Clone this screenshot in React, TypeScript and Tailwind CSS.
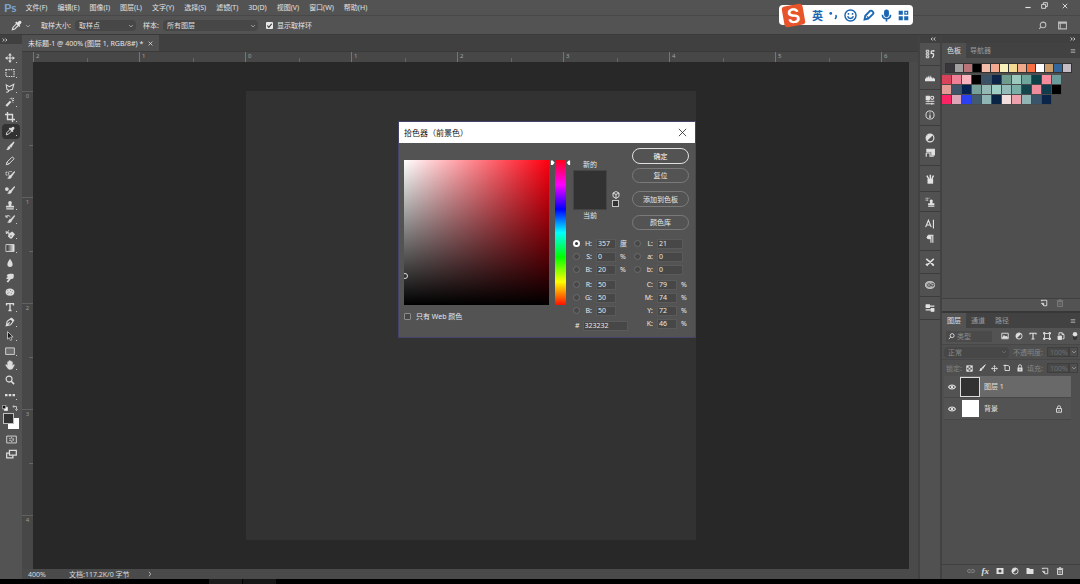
import React from "react";

type IconProps = { className?: string; children: React.ReactNode };

function Icon({ className = "size-[11px]", children }: IconProps) {
  return (
    <svg
      viewBox="0 0 16 16"
      className={"shrink-0 " + className}
      fill="none"
      stroke="currentColor"
      strokeWidth="1.8"
      aria-hidden="true"
    >
      {children}
    </svg>
  );
}

const eyedropper = (
  <>
    <path d="M2 14l1-3.500 5.500-5.500 2.500 2.500L5.500 13z" strokeWidth="1.600" />
    <path d="M6 4l6 6 1.500-1.500-1.200-1.200 2.200-2.200c1.200-1.400.7-2.900-.3-3.600-1-.8-2.200-.5-3 .3L9.300 3.700 8 2.300z" fill="currentColor" stroke="none" />
  </>
);
const brush = (
  <>
    <path d="M14.500 1.500L8 7.500l1.700 1.700z" fill="currentColor" strokeWidth="1.800" />
    <path d="M7.300 8.300c-2-.4-3 .8-3.200 2.500-.1 1.400-1 2.500-2.600 2.700 2.600 1.500 7 .8 7.300-3.500z" fill="currentColor" stroke="none" />
  </>
);
const smallBrush = (
  <path d="M15 2L9 8.500c-1.600-.3-2.600.7-2.900 2.300-.2 1.200-1 2-2.100 2.400 2.700 1.500 6.600.5 7-3.200L16 3z" fill="currentColor" stroke="currentColor" strokeWidth="0.600" />
);
const stamp = (
  <path d="M8 1.500a3 3 0 0 1 2.600 4.300c-.6 1.200-.6 2.200-.6 3.200h3.500c.6 0 1 .4 1 1V12h-13v-2c0-.6.4-1 1-1H6c0-1 0-2-.6-3.200A3 3 0 0 1 8 1.500zM2 13h12v2H2z" fill="currentColor" stroke="none" />
);
const move = (
  <>
    <path d="M8 3v10M3 8h10" />
    <path d="M8 0l3 4H5zM8 16l3-4H5zM0 8l4-3v6zM16 8l-4-3v6z" fill="currentColor" stroke="none" />
  </>
);
const newPage = (
  <>
    <path d="M5 3.500H2.500v-1h11v11H7.500" strokeWidth="1.800" />
    <path d="M2.500 8.500h5v5z" fill="currentColor" strokeWidth="1.200" />
  </>
);
const trash = (
  <>
    <path d="M3 5h10v10H3zM1.500 3.500h13M6 3V1.500h4V3" />
    <path d="M6 7v6M8 7v6M10 7v6" strokeWidth="1" />
  </>
);
const halfCircle = (
  <>
    <circle cx="8" cy="8" r="6.200" />
    <path d="M12.500 3.500a6.400 6.400 0 0 0-9 9z" fill="currentColor" stroke="none" />
  </>
);
const lock = (
  <>
    <path d="M3 7h10v8H3z" fill="currentColor" stroke="none" />
    <path d="M5 7V4.500a3 3 0 0 1 6 0V7" strokeWidth="1.800" />
    <path d="M8 9.500v3" stroke="#4f4f4f" />
  </>
);
const chevron = <path d="M3 5.500l5 5 5-5" strokeWidth="2.200" />;
const panelMenu = <path d="M2 4h12M2 8h12M2 12h12" strokeWidth="2" />;

type Tool = { name: string; art: React.ReactNode; more: boolean };

const tools: Tool[] = [
  { name: "移动工具", more: true, art: move },
  { name: "矩形选框工具", more: true, art: <path d="M1.500 2.500h13v11h-13z" strokeDasharray="2.400 1.400" /> },
  { name: "多边形套索工具", more: true, art: <path d="M2 3l5 3 7-4-2 8-6 2-3-2zM6 12c0 2-1.500 3-4 2.500" strokeWidth="1.700" /> },
  {
    name: "魔棒工具", more: true,
    art: <><path d="M2 14.500l7-7.500" strokeWidth="3.500" /><path d="M11 1v3M14.500 5.500h-3M14.500 1.500l-2 2M8 2l1.500 1.500M13 9l-1-1.500" strokeWidth="1.600" /></>,
  },
  { name: "裁剪工具", more: true, art: <path d="M4 0v12h12M0 4h12v12" strokeWidth="2.200" /> },
  { name: "吸管工具", more: true, art: eyedropper },
  { name: "画笔工具", more: false, art: brush },
  { name: "铅笔工具", more: false, art: <path d="M2 14l1-4 8-8c1.500-1 4 1.500 3 3l-8 8zM3.500 10l2.500 2.500" strokeWidth="1.600" /> },
  { name: "混合器画笔工具", more: false, art: <>{smallBrush}<path d="M1.500 3.500h4.500v4.500H1.500zM7 2.500h4" strokeWidth="1.500" strokeDasharray="2 0.800" /></> },
  { name: "颜色替换工具", more: false, art: <>{smallBrush}<circle cx="3" cy="6.500" r="3" fill="currentColor" stroke="none" /></> },
  { name: "仿制图章工具", more: true, art: stamp },
  { name: "历史记录画笔工具", more: true, art: <>{smallBrush}<path d="M1.500 4.500c2-2.500 5-2.500 7 0M1.500 2v3h3" strokeWidth="1.600" /></> },
  {
    name: "橡皮擦工具", more: true,
    art: <><path d="M5.500 8l6-4L16 8.500l-5 6.500H8l-3-3.500z" fill="currentColor" stroke="none" /><path d="M1 3l5 5M6 2L2 8M1 6h6" strokeWidth="1.500" /><circle cx="9.500" cy="11" r="1.200" fill="#535353" stroke="none" /></>,
  },
  {
    name: "渐变工具", more: true,
    art: <><defs><linearGradient id="toolGradient"><stop offset="0" stopColor="#222" /><stop offset="1" stopColor="#eee" /></linearGradient></defs><path d="M1.500 2.500h13v11h-13z" fill="url(#toolGradient)" strokeWidth="1.400" /></>,
  },
  { name: "模糊工具", more: false, art: <path d="M8 1c2 3.500 4.200 5.700 4.200 9a4.200 4.200 0 0 1-8.400 0C3.800 6.700 6 4.500 8 1z" fill="currentColor" stroke="none" /> },
  { name: "涂抹工具", more: false, art: <path d="M3 3c3-2 7-2 11-1v4c0 3-3 4-5 4l-4 5-2.500-1L6 9 3 10 2 8l3-2-2-1z" fill="currentColor" stroke="none" /> },
  {
    name: "海绵工具", more: false,
    art: <><path d="M1 8c0-4 3-5.500 7-5.500S15 4.500 15 8s-2 6-7 6-7-2-7-6z" fill="currentColor" stroke="none" /><path d="M4 6h1M8 5.500h1M11 7h1M6 9h1M9.500 10.500h1M4 10.500h1" stroke="#555" strokeWidth="1.400" /></>,
  },
  { name: "文字工具", more: true, art: <path d="M2.500 5.500V2.500h11v3M8 2.500v11M5.500 13.500h5" strokeWidth="2.200" /> },
  { name: "钢笔工具", more: true, art: <path d="M2 14l1.500-7L9 3l4 4-4 5.500zM2 14l5.500-5.500M10 1.500l4.500 4.500" strokeWidth="1.900" /> },
  { name: "路径选择工具", more: true, art: <path d="M4 1l9 8.500H9l2 4.500-2.200 1-2-4.500L4 13z" fill="#1c1c1c" strokeWidth="1.200" /> },
  { name: "矩形工具", more: true, art: <path d="M1 3h14v10.500H1z" fill="#6d6d6d" strokeWidth="1.400" /> },
  { name: "抓手工具", more: true, art: <path d="M4 9V3.500a1 1 0 0 1 2 0V7 1.800a1 1 0 0 1 2 0V7 2a1 1 0 0 1 2 0v5.500-4a1 1 0 0 1 2 0V9l1.500-1.500c1-.8 2 .2 1.500 1L12 14c-2 2-6 1.500-7.500-.5L1 8.500C.6 7.300 2 6.800 2.600 7.500z" fill="currentColor" stroke="currentColor" strokeWidth="0.500" /> },
  { name: "缩放工具", more: false, art: <><circle cx="6.500" cy="6.500" r="4.800" /><path d="M10 10l4.500 4.500" strokeWidth="2.600" /></> },
  { name: "编辑工具栏", more: true, art: <path d="M0 6.500h4v3.500H0zM6 6.500h4v3.500H6zM12 6.500h4v3.500h-4z" fill="currentColor" stroke="none" /> },
];

const menus = ["文件(F)", "编辑(E)", "图像(I)", "图层(L)", "文字(Y)", "选择(S)", "滤镜(T)", "3D(D)", "视图(V)", "窗口(W)", "帮助(H)"];

const swatchHead = ["#38363a", "#a3a0a2", "#b87377", "#000000", "#f3bca9", "#f2a98f", "#f8f0bb", "#f3dc92", "#f1a98c", "#f67041", "#ffffff", "#cc9c68", "#33669b", "#c5bdc5"];
const swatchRows = [
  ["#d8435b", "#ee8196", "#f7b4be", "#000000", "#3b5166", "#0b2447", "#6f9c8c", "#9cc9bd", "#6ea69e", "#0d4148", "#f58b9c", "#699c9a"],
  ["#e59b95", "#405469", "#04214f", "#78a09b", "#95b9b5", "#9fcfc5", "#93bcb9", "#7caea8", "#13444b", "#f08d9c", "#123b4e", "#000000"],
  ["#fa2364", "#dca5b8", "#2b40f0", "#43596c", "#8fb6b4", "#0a2446", "#f3dede", "#eda1ad", "#91b5b5", "#3a5569", "#0b2549"],
];

const dockGroups: { height: string; items: { name: string; art: React.ReactNode }[] }[] = [
  {
    height: "h-[23px]",
    items: [{ name: "历史记录", art: <><path d="M2 2h4v3H2zM2 6.500h4v3H2zM2 11h4v3H2z" strokeWidth="1.500" /><path d="M10 3h4M10 3v4c5-1 5 5 1 7M14 1.500v3" strokeWidth="2" /></> }],
  },
  {
    height: "h-6",
    items: [{ name: "直方图", art: <path d="M0 13V9l2-1 1-3 1 3 1-4 2 4 1-5 2 5 1-3 1 4 2-2 2 3v3z" fill="currentColor" stroke="none" /> }],
  },
  {
    height: "h-9",
    items: [
      { name: "属性", art: <><path d="M2 2h5v5H2z" fill="currentColor" /><circle cx="11.500" cy="4.500" r="2.500" /><path d="M1 10h14M1 14h14M5 8.500v3M11 12.500v3" /></> },
      { name: "信息", art: <><circle cx="8" cy="8" r="6.500" strokeWidth="1.500" /><path d="M8 7v5M8 3.800v1.700M6.500 11.500h3" /></> },
    ],
  },
  {
    height: "h-10",
    items: [
      { name: "调整", art: halfCircle },
      { name: "样式", art: <><path d="M3 2h12v9h-4V6H3z" fill="currentColor" /><path d="M2 8h6v6M2 8v6M9 13h5" /></> },
    ],
  },
  {
    height: "h-[26px]",
    items: [{ name: "画笔预设", art: <><path d="M4 8h9v7.500H4z" fill="currentColor" stroke="none" /><path d="M6 8L3 2.500M8.500 8V1M11 8l2.500-5.500" strokeWidth="2.400" /></> }],
  },
  {
    height: "h-5",
    items: [{ name: "仿制源", art: <><path d="M1 2h6M1 5h4" strokeDasharray="1.500 1" /><path d="M10 4a2.500 2.500 0 0 1 2 4v2h3v3H5v-3h3V8a2.500 2.500 0 0 1 2-4zM5 14h10v1.500H5z" fill="currentColor" stroke="none" /></> }],
  },
  {
    height: "h-[39px]",
    items: [
      { name: "字符", art: <path d="M1 13L5.500 2 10 13M2.500 9.500h6M13.500 1v14" /> },
      { name: "段落", art: <><path d="M12.500 2v12M9.500 2v12M5 2h8.500" /><path d="M9.500 2H6a3 3 0 0 0 0 6.500h3.500z" fill="currentColor" stroke="none" /></> },
    ],
  },
  {
    height: "h-[23px]",
    items: [{ name: "工具预设", art: <path d="M2 3l12 10M14 3L3 13M1.500 11l3 3M11 11.500l3 2.500" strokeWidth="2.400" /> }],
  },
  {
    height: "h-[23px]",
    items: [{ name: "库", art: <><ellipse cx="8" cy="8" rx="7.500" ry="5.500" fill="#a8a8a8" strokeWidth="1.200" /><path d="M9 8a2.500 2 0 1 1-1-1.500l3 3a2.500 2 0 1 0-1-3" stroke="#444" strokeWidth="1.300" /></> }],
  },
  {
    height: "h-[23px]",
    items: [{ name: "画笔设置", art: <><path d="M1 5h14M1 11h14" /><path d="M2 3h5v4H2zM10 9h4v4h-4z" fill="currentColor" /></> }],
  },
];

function Select({ label, value, width, dim }: { label: string; value: string; width: string; dim?: boolean }) {
  return (
    <span className={"relative flex h-[11px] items-center rounded-sm bg-[#474747] " + width}>
      <select
        aria-label={label}
        className={"h-full w-full appearance-none bg-transparent pl-1 text-[7px] leading-none outline-none " + (dim ? "text-[#8a8a8a]" : "text-[#dedede]")}
      >
        <option>{value}</option>
      </select>
      <Icon className={"pointer-events-none absolute right-0.5 size-[6px] " + (dim ? "text-[#707070]" : "text-[#b0b0b0]")}>{chevron}</Icon>
    </span>
  );
}

function ColorRow({ id, name, value, unit, radio, checked, wide, last }: {
  id: string; name: string; value: string; unit?: string; radio?: boolean; checked?: boolean; wide?: boolean; last?: boolean;
}) {
  return (
    <div className={"flex h-[13px] items-center " + (last ? "mb-0.5" : "")}>
      <span className="flex w-[9px] shrink-0">
        {radio && (
          <input
            type="radio"
            name="channel"
            defaultChecked={checked}
            aria-label={name + " " + id}
            className="size-[7px] appearance-none rounded-full border border-[#6c6c6c] bg-[#474747] checked:border-2 checked:border-white checked:bg-[#333]"
          />
        )}
      </span>
      <label htmlFor={id} className="w-[10px] shrink-0 text-right">{name}:</label>
      <input
        id={id}
        defaultValue={value}
        className={"ml-1 h-[10px] min-w-0 shrink-0 border border-[#5a5a5a] bg-[#474747] pl-px outline-none " + (wide ? "w-[26px]" : "w-5")}
      />
      {unit && <span className="ml-1">{unit}</span>}
    </div>
  );
}

function ColorPicker() {
  return (
    <section
      role="dialog"
      aria-label="拾色器"
      className="absolute top-[121px] left-[398px] w-[298px] border border-[#44446a] bg-[#535353] text-[7px] leading-none text-[#e8e8e8]"
    >
      <header className="flex h-[21px] items-center justify-between bg-white pr-2 pl-[5px] text-[#111]">
        <h2 className="text-[8px]">拾色器（前景色）</h2>
        <button aria-label="关闭" className="text-[#222]">
          <Icon className="size-[9px]"><path d="M1.500 1.500l13 13M14.500 1.500l-13 13" strokeWidth="1.400" /></Icon>
        </button>
      </header>
      <div className="flex h-[194px] px-[5px]">
        <div className="pt-[17px]">
          <div
            className="relative h-[145px] w-[145px] overflow-hidden bg-[linear-gradient(to_top,#000,transparent),linear-gradient(to_right,#fff,#ff0010)]"
            role="img"
            aria-label="颜色区域"
          >
            <span className="absolute top-[113px] -left-0.5 size-[6px] rounded-full border border-[#ddd]" />
          </div>
          <label className="mt-2 flex items-center gap-[5px]">
            <input type="checkbox" className="size-[7px] appearance-none rounded-[1px] border border-[#8c8c8c] bg-[#464646]" />
            只有 Web 颜色
          </label>
        </div>
        <div className="flex pt-[17px]">
          <Icon className="size-[6px] text-white"><path d="M5 1h5l5 6-5 6H5z" fill="currentColor" stroke="none" /></Icon>
          <div className="relative h-[145px] w-[11px] bg-[linear-gradient(to_bottom,#ff0018,#ff00ff_17%,#0000ff_34%,#00ffff_50%,#00ff00_67%,#ffff00_84%,#ff1000)]">
            <input type="range" min="0" max="360" defaultValue="357" aria-label="色相" className="absolute inset-0 h-full w-full opacity-0 [writing-mode:vertical-lr]" />
          </div>
          <Icon className="size-[6px] text-white"><path d="M11 1H7L2 7l5 6h4z" fill="currentColor" stroke="none" /></Icon>
        </div>
        <div className="ml-px flex flex-col pt-[5px]">
          <div className="flex h-[89px]">
            <div className="flex w-[34px] flex-col items-center pt-[13px]">
              <span>新的</span>
              <div className="my-0.5 h-10 w-full border border-[#454545] bg-[#323232]" />
              <span>当前</span>
            </div>
            <div className="flex w-[25px] flex-col items-start gap-px pt-[43px] pl-[5px]">
              <Icon className="size-2"><path d="M8 1l6 3v7l-6 4-6-4V4zM2 4l6 3 6-3M8 7v8" /></Icon>
              <span className="size-[7px] border border-[#c5c5c5] bg-[#323232]" />
            </div>
            <div className="flex flex-col">
              <button className="h-4 w-[57px] rounded-full border border-[#e0e0e0] text-white">确定</button>
              <button className="mt-1 h-[15px] w-[57px] rounded-full border border-[#7a7a7a]">复位</button>
              <button className="mt-2 h-4 w-[57px] rounded-full border border-[#7a7a7a]">添加到色板</button>
              <button className="mt-2 h-[15px] w-[57px] rounded-full border border-[#7a7a7a]">颜色库</button>
            </div>
          </div>
          <div className="flex">
            <div className="w-[61px]">
              <ColorRow id="hue" name="H" value="357" unit="度" radio checked />
              <ColorRow id="sat" name="S" value="0" unit="%" radio />
              <ColorRow id="bri" name="B" value="20" unit="%" radio last />
              <ColorRow id="red" name="R" value="50" radio />
              <ColorRow id="green" name="G" value="50" radio />
              <ColorRow id="blue" name="B" value="50" radio last />
              <div className="flex h-[13px] items-center">
                <label htmlFor="hex" className="pl-0.5">#</label>
                <input id="hex" defaultValue="323232" className="ml-[3px] h-[10px] w-[45px] border border-[#5a5a5a] bg-[#474747] pl-px outline-none" />
              </div>
            </div>
            <div>
              <ColorRow id="lab-l" name="L" value="21" radio wide />
              <ColorRow id="lab-a" name="a" value="0" radio wide />
              <ColorRow id="lab-b" name="b" value="0" radio wide last />
              <ColorRow id="cyan" name="C" value="79" unit="%" />
              <ColorRow id="magenta" name="M" value="74" unit="%" />
              <ColorRow id="yellow" name="Y" value="72" unit="%" />
              <ColorRow id="black" name="K" value="46" unit="%" />
            </div>
          </div>
        </div>
      </div>
    </section>
  );
}

function InputMethodBar() {
  return (
    <div className="absolute top-[5px] left-[779px] flex h-5 w-[134px] items-center rounded-sm bg-white pr-1 text-[#1b66b3]">
      <span className="ml-1 flex size-[21px] -rotate-10 items-center justify-center rounded-[3px] bg-[#e8542a] font-[Inter] text-[20px] leading-none font-semibold text-white">S</span>
      <div className="ml-2 flex flex-1 items-center justify-between">
        <span className="text-[11px] leading-none font-bold">英</span>
        <Icon><circle cx="4" cy="5" r="2" fill="currentColor" stroke="none" /><path d="M11 7.500c1.500 1.500 1 4-1 5.500" strokeWidth="2.400" /></Icon>
        <Icon className="size-[13px]"><circle cx="8" cy="8" r="6.800" /><path d="M4.500 9c1 3.500 6 3.500 7 0M5.500 5v2M10.500 5v2" /></Icon>
        <Icon className="size-[12px]"><path d="M2 14l1-5 6.500-6.500c2.500-1 5.500 2 4 4L7 13z" strokeWidth="2.400" /><path d="M5 10l3 2" strokeWidth="2" /></Icon>
        <Icon className="size-[13px]"><rect x="5" y="0.500" width="6" height="9.500" rx="3" fill="currentColor" stroke="none" /><path d="M3 7c0 6.500 10 6.500 10 0M8 12v3.500" strokeWidth="2" /></Icon>
        <Icon><path d="M1 1h6v6H1zM1 9h6v6H1zM9 9h6v6H9z" fill="currentColor" stroke="none" /><path d="M10 2h4v4h-4z" strokeWidth="1.800" /></Icon>
      </div>
    </div>
  );
}

function DocumentArea() {
  return (
    <main className="flex min-w-0 flex-1 flex-col bg-[#474747]">
      <div className="flex h-4 bg-[#404040]">
        <div className="flex h-full items-center gap-[5px] bg-[#505050] px-1.5 text-[7px] text-[#e4e4e4]">
          <span>未标题-1 @ 400% (图层 1, RGB/8#) *</span>
          <button aria-label="关闭文档"><Icon className="size-[5px]"><path d="M2 2l12 12M14 2L2 14" strokeWidth="2.400" /></Icon></button>
        </div>
      </div>
      <div className="flex h-[11px] overflow-hidden border-t border-[#3a3a3a] pl-[11px] text-[6px] leading-none text-[#a2a2a2]">
        {[2, 1, 0, 1, 2, 3, 4, 5, 6].map((n, i) => (
          <div key={i} className="flex w-[106px] shrink-0 items-end border-l border-[#757575]">
            <span className="flex-1 self-start pt-px pl-0.5">{n}</span>
            <span className="h-1 flex-1 border-l border-[#666]" />
          </div>
        ))}
      </div>
      <div className="flex min-h-0 flex-1">
        <div className="w-[11px] shrink-0 overflow-hidden pt-[29px] text-center text-[6px] leading-none text-[#9a9a9a]">
          {[0, 1, 2, 3, 4].map((n) => (
            <div key={n} className="flex h-[106px] flex-col items-end border-t border-[#606060]">
              <span className="w-full flex-1 pt-px">{n}</span>
              <span className="w-1 flex-1 border-t border-[#666]" />
            </div>
          ))}
        </div>
        <div className="min-w-0 flex-1 overflow-hidden bg-[#282828] pt-[29px] pl-[213px]">
          <div className="h-[449px] w-[450px] bg-[#323232]" />
        </div>
        <div className="w-[9px] shrink-0 bg-[#4a4a4a]" />
      </div>
      <footer className="flex h-[10px] items-center bg-[#4a4a4a] pl-1.5 text-[7px] leading-none text-[#dcdcdc]">
        <span className="w-[41px]">400%</span>
        <span className="w-[78px]">文档:117.2K/0 字节</span>
        <Icon className="size-[6px]"><path d="M5 2l5 6-5 6" /></Icon>
      </footer>
    </main>
  );
}

function ToolBar() {
  return (
    <nav aria-label="工具" className="flex w-[22px] shrink-0 flex-col items-center bg-[#535353] text-[#dcdcdc]">
      <div className="flex h-[9px] w-full items-center bg-[#404040] pl-0.5">
        <Icon className="size-[6px]"><path d="M2 4l4 4-4 4M9 4l4 4-4 4" strokeWidth="2.400" /></Icon>
      </div>
      <div className="mt-[7px] grid h-[351px] w-full grid-rows-[repeat(24,1fr)] px-0.5">
        {tools.map((tool) => (
          <button
            key={tool.name}
            aria-label={tool.name}
            className={"flex items-center justify-center gap-px " + (tool.name === "吸管工具" ? "rounded-sm bg-[#323232]" : "")}
          >
            <Icon className="size-[10px]">{tool.art}</Icon>
            <span className="flex h-[10px] w-px items-end">
              {tool.more && <span className="size-px bg-[#c8c8c8]" />}
            </span>
          </button>
        ))}
      </div>
      <div className="mt-[3px] flex w-full justify-between pr-1 pl-0.5">
        <button aria-label="默认颜色"><Icon className="size-[6px]"><path d="M6 6h9v9H6z" fill="#fff" /><path d="M1 1h9v9H1z" fill="#111" /></Icon></button>
        <button aria-label="切换颜色"><Icon className="size-[6px]"><path d="M4 4h8v8M6 1L2 4l4 3M9 11l3 4 3-4" strokeWidth="2.200" /></Icon></button>
      </div>
      <div className="mt-0.5 grid grid-cols-[11px_5px] grid-rows-[11px_5px]">
        <button aria-label="前景色" className="z-10 col-start-1 row-start-1 border border-[#bdbdbd] bg-[#323232]" />
        <button aria-label="背景色" className="col-span-2 col-start-1 row-span-2 row-start-1 mt-[5px] ml-[5px] bg-white" />
      </div>
      <button aria-label="快速蒙版" className="mt-[5px]"><Icon><path d="M1 3h14v10H1z" strokeWidth="1.300" /><circle cx="8" cy="8" r="2.500" strokeDasharray="1.500 1" /></Icon></button>
      <button aria-label="屏幕模式" className="mt-1"><Icon><path d="M5 2h10v7H5z" /><path d="M5 6H1v7h9V9" /></Icon></button>
    </nav>
  );
}

function SidePanels() {
  return (
    <aside className="flex w-[138px] shrink-0 flex-col bg-[#4f4f4f] text-[7px] leading-none text-[#e0e0e0]">
      <div className="flex h-2 items-center justify-end bg-[#404040] pr-1"><Icon className="size-[6px]"><path d="M2 4l4 4-4 4M9 4l4 4-4 4" strokeWidth="2.400" /></Icon></div>
      <div className="flex h-[15px] items-center bg-[#424242] pr-1">
        <button className="h-full bg-[#4f4f4f] px-[5px]">色板</button>
        <button className="h-full px-1 text-[#9c9c9c]">导航器</button>
        <button aria-label="色板菜单" className="ml-auto"><Icon className="size-[6px] text-[#a8a8a8]">{panelMenu}</Icon></button>
      </div>
      <div className="h-[240px] pt-[5px]">
        <div className="ml-[3px] flex w-fit border-l border-[#333]">
          {swatchHead.map((color, i) => (
            <span key={i} className="h-[10px] w-[9px] border-y border-r border-[#333]" style={{ backgroundColor: color }} />
          ))}
        </div>
        <div className="mt-0.5 flex flex-col">
          {swatchRows.map((row, r) => (
            <div key={r} className="flex">
              {row.map((color, i) => (
                <span key={i} className="size-[10px] border-r border-b border-[#4a4a4a]" style={{ backgroundColor: color }} />
              ))}
            </div>
          ))}
        </div>
      </div>
      <div className="flex h-[13px] items-center justify-end gap-2 border-t border-[#404040] bg-[#535353] pr-4 pb-1">
        <button aria-label="新建色板"><Icon className="size-2">{newPage}</Icon></button>
        <button aria-label="删除色板" className="text-[#7d7d7d]"><Icon className="size-2">{trash}</Icon></button>
      </div>
      <div className="flex h-[17px] items-center border-t-2 border-[#383838] bg-[#424242] pr-1">
        <button className="h-full bg-[#535353] px-[5px]">图层</button>
        <button className="h-full px-[5px] text-[#9c9c9c]">通道</button>
        <button className="h-full px-[5px] text-[#9c9c9c]">路径</button>
        <button aria-label="图层菜单" className="ml-auto"><Icon className="size-[6px] text-[#a8a8a8]">{panelMenu}</Icon></button>
      </div>
      <div className="flex flex-1 flex-col">
        <div className="flex h-[17px] items-center border-b border-[#474747] bg-[#535353] pr-px">
          <label className="ml-1 flex h-[11px] w-[46px] items-center gap-0.5 bg-[#4a4a4a] pl-0.5">
            <Icon className="size-[7px]"><circle cx="9.500" cy="6" r="4.500" strokeWidth="2" /><path d="M6 9l-4 5" strokeWidth="2" /></Icon>
            <input aria-label="图层类型" defaultValue="类型" className="w-8 bg-transparent text-[#8a8a8a] outline-none" />
          </label>
          <div className="ml-auto flex items-center gap-[6px]">
            <Icon className="size-2"><path d="M1.500 2.500h13v11h-13z" /><path d="M3 12l3-5 3 3 2-2 2 4z" fill="currentColor" /></Icon>
            <Icon className="size-2">{halfCircle}</Icon>
            <Icon className="size-2"><path d="M2 5V2.500h12V5M8 2.500v11M5 14h6" strokeWidth="2.400" /></Icon>
            <Icon className="size-2"><path d="M3 3h10v10H3zM1 1h3v3H1zM12 1h3v3h-3zM1 12h3v3H1zM12 12h3v3h-3z" /></Icon>
            <Icon className="size-2"><path d="M4 6V1.500h6L14 5v8.500h-3M10 1.500V5h4" /><path d="M2 8h7v7H2z" fill="currentColor" /></Icon>
            <Icon className="size-2"><rect x="4" y="1" width="8" height="15" rx="4" fill="#333" stroke="none" /><circle cx="8" cy="4.500" r="4.500" fill="currentColor" stroke="none" /></Icon>
          </div>
        </div>
        <div className="flex h-[15px] items-center border-b border-[#474747] pr-0.5 text-[#858585]">
          <span className="ml-0.5"><Select label="混合模式" value="正常" width="w-[65px]" dim /></span>
          <label htmlFor="opacity" className="ml-auto">不透明度:</label>
          <input id="opacity" defaultValue="100%" className="ml-1 h-[10px] w-[22px] min-w-0 border border-[#3f3f3f] bg-[#484848] pl-0.5 text-[#6d6d6d] outline-none" />
          <button aria-label="调整不透明度" className="flex h-[10px] w-[9px] shrink-0 items-center justify-center border border-[#3f3f3f] text-[#a0a0a0]"><Icon className="size-[6px]">{chevron}</Icon></button>
        </div>
        <div className="flex h-4 items-center pr-0.5 text-[#858585]">
          <span className="ml-1">锁定:</span>
          <span className="ml-1 flex items-center gap-[5px] text-[#e0e0e0]">
            <Icon className="size-[7px]"><path d="M1.500 1.500h13v13h-13z" /><path d="M2 2h4v4H2zM10 2h4v4h-4zM6 6h4v4H6zM2 10h4v4H2zM10 10h4v4h-4z" fill="currentColor" stroke="none" /></Icon>
            <Icon className="size-2">{brush}</Icon>
            <Icon className="size-[7px]">{move}</Icon>
            <Icon className="size-2"><path d="M4 1v12h9V6M1 3h9l4 3" /></Icon>
            <Icon className="size-2">{lock}</Icon>
          </span>
          <label htmlFor="fill" className="ml-auto">填充:</label>
          <input id="fill" defaultValue="100%" className="ml-1 h-[10px] w-[22px] min-w-0 border border-[#3f3f3f] bg-[#484848] pl-0.5 text-[#6d6d6d] outline-none" />
          <button aria-label="调整填充" className="flex h-[10px] w-[9px] shrink-0 items-center justify-center border border-[#3f3f3f] text-[#a0a0a0]"><Icon className="size-[6px]">{chevron}</Icon></button>
        </div>
        <ul className="mr-[9px] ml-0.5">
          {[
            { name: "图层 1", active: true },
            { name: "背景", active: false },
          ].map((layer) => (
            <li key={layer.name} className={"flex h-[22px] items-center border-b border-[#474747] pr-2 " + (layer.active ? "bg-[#696969]" : "bg-[#535353]")}>
              <button aria-label="图层可见性" className="flex h-full w-4 items-center justify-center bg-[#535353]">
                <Icon className="size-2"><path d="M1 8c3-5.500 11-5.500 14 0-3 5.500-11 5.500-14 0z" strokeWidth="2.200" /><circle cx="8" cy="8" r="2.500" fill="currentColor" stroke="none" /></Icon>
              </button>
              <span className={"flex size-5 items-center justify-center border " + (layer.active ? "border-[#dcdcdc]" : "border-transparent")}>
                <span className={layer.active ? "size-[18px] bg-[#323232]" : "size-[17px] bg-white"} />
              </span>
              <span className="ml-1">{layer.name}</span>
              {!layer.active && (
                <Icon className="ml-auto size-2"><path d="M3 7h10v7.500H3zM5 7V4.500a3 3 0 0 1 6 0V7M8 9.500v3" /></Icon>
              )}
            </li>
          ))}
        </ul>
      </div>
      <div className="flex h-[15px] items-center justify-end gap-[7px] border-t border-[#404040] pr-4 pb-0.5">
        <Icon className="size-2 text-[#858585]"><path d="M7 5H4a3 3 0 0 0 0 6h3M9 5h3a3 3 0 0 1 0 6H9M5 8h6" /></Icon>
        <button aria-label="图层样式" className="font-[Liberation_Serif] text-[9px] font-bold italic">fx</button>
        <button aria-label="添加蒙版"><Icon className="size-2"><path d="M1 2h14v12H1z" fill="currentColor" stroke="none" /><circle cx="8" cy="8" r="3.200" fill="#4a4a4a" stroke="none" /></Icon></button>
        <button aria-label="新建调整图层"><Icon className="size-2">{halfCircle}</Icon></button>
        <button aria-label="新建组"><Icon className="size-2"><path d="M1 2h5l2 2h7v10H1z" fill="currentColor" stroke="none" /></Icon></button>
        <button aria-label="新建图层"><Icon className="size-2">{newPage}</Icon></button>
        <button aria-label="删除图层"><Icon className="size-2">{trash}</Icon></button>
      </div>
    </aside>
  );
}

export default function App() {
  return (
    <div className="relative flex h-screen w-full flex-col overflow-hidden bg-[#424242] font-['Noto_Sans','Noto_Sans_CJK_SC',sans-serif] text-[7px] leading-none text-[#e2e2e2]">
      <header className="flex h-[15px] shrink-0 items-center bg-[#535353] pl-1">
        <span className="font-[Lato] text-[12px] leading-none font-bold text-[#7ba4cf]">Ps</span>
        <nav className="ml-[9px] flex items-center gap-[10px]">
          {menus.map((item) => (
            <button key={item}>{item}</button>
          ))}
        </nav>
        <div className="mr-3 ml-auto flex items-center gap-[10px] pb-1">
          <button aria-label="最小化"><Icon className="size-[6px]"><path d="M1 12h14" strokeWidth="3" /></Icon></button>
          <button aria-label="还原"><Icon className="size-[7px]"><path d="M1.500 5.500h9v9h-9zM5.500 5V1.500h9v9H11" strokeWidth="2" /></Icon></button>
          <button aria-label="关闭" className="ml-1"><Icon className="size-[6px]"><path d="M2 2l12 12M14 2L2 14" strokeWidth="2.400" /></Icon></button>
        </div>
      </header>
      <div className="flex h-[19px] shrink-0 items-center border-t border-[#484848] bg-[#535353] pt-px pr-[13px] pl-[11px]">
        <Icon className="size-[11px]">{eyedropper}</Icon>
        <Icon className="ml-[3px] size-[6px] text-[#b0b0b0]">{chevron}</Icon>
        <span className="ml-[10px] w-[34px]">取样大小:</span>
        <Select label="取样大小" value="取样点" width="w-[61px]" />
        <span className="mr-1 ml-[7px]">样本:</span>
        <Select label="样本" value="所有图层" width="w-[95px]" />
        <label className="ml-2 flex items-center gap-1">
          <span className="relative flex size-[7px]">
            <input type="checkbox" defaultChecked className="size-[7px] appearance-none rounded-[1px] bg-[#e8e8e8]" />
            <Icon className="pointer-events-none absolute inset-0 size-[7px] text-[#333]"><path d="M3 8l3.500 4L13 4" strokeWidth="2.600" /></Icon>
          </span>
          显示取样环
        </label>
        <div className="ml-auto flex items-center gap-[11px] text-[#bdbdbd]">
          <button aria-label="搜索"><Icon className="size-[9px]"><circle cx="9" cy="7" r="5" /><path d="M5.500 10.500L2 14" /></Icon></button>
          <button aria-label="工作区"><Icon className="size-[9px]"><path d="M1 2h14v12H1zM4 2v12M1 4h14" /></Icon></button>
        </div>
      </div>
      <div className="flex min-h-0 flex-1 border-t border-[#3a3a3a]">
        <ToolBar />
        <DocumentArea />
        <nav aria-label="面板" className="mr-0.5 ml-0.5 flex w-5 shrink-0 flex-col bg-[#515151]">
          <div className="flex h-2 items-center justify-end bg-[#404040] pr-1"><Icon className="size-[6px]"><path d="M7 4L3 8l4 4M14 4l-4 4 4 4" strokeWidth="2.400" /></Icon></div>
          {dockGroups.map((group, i) => (
            <div key={i} className={"flex flex-col items-center justify-center gap-[5px] border-b border-[#3c3c3c] " + group.height}>
              {group.items.map((item) => (
                <button key={item.name} aria-label={item.name}><Icon className="size-[10px]">{item.art}</Icon></button>
              ))}
            </div>
          ))}
        </nav>
        <SidePanels />
      </div>
      <div className="flex h-[5px] shrink-0 bg-black pl-[209px]">
        <div className="w-[33px] bg-[#1c1c1c]" />
        <div className="ml-px w-[33px] bg-[#161616]" />
      </div>
      <InputMethodBar />
      <ColorPicker />
    </div>
  );
}
